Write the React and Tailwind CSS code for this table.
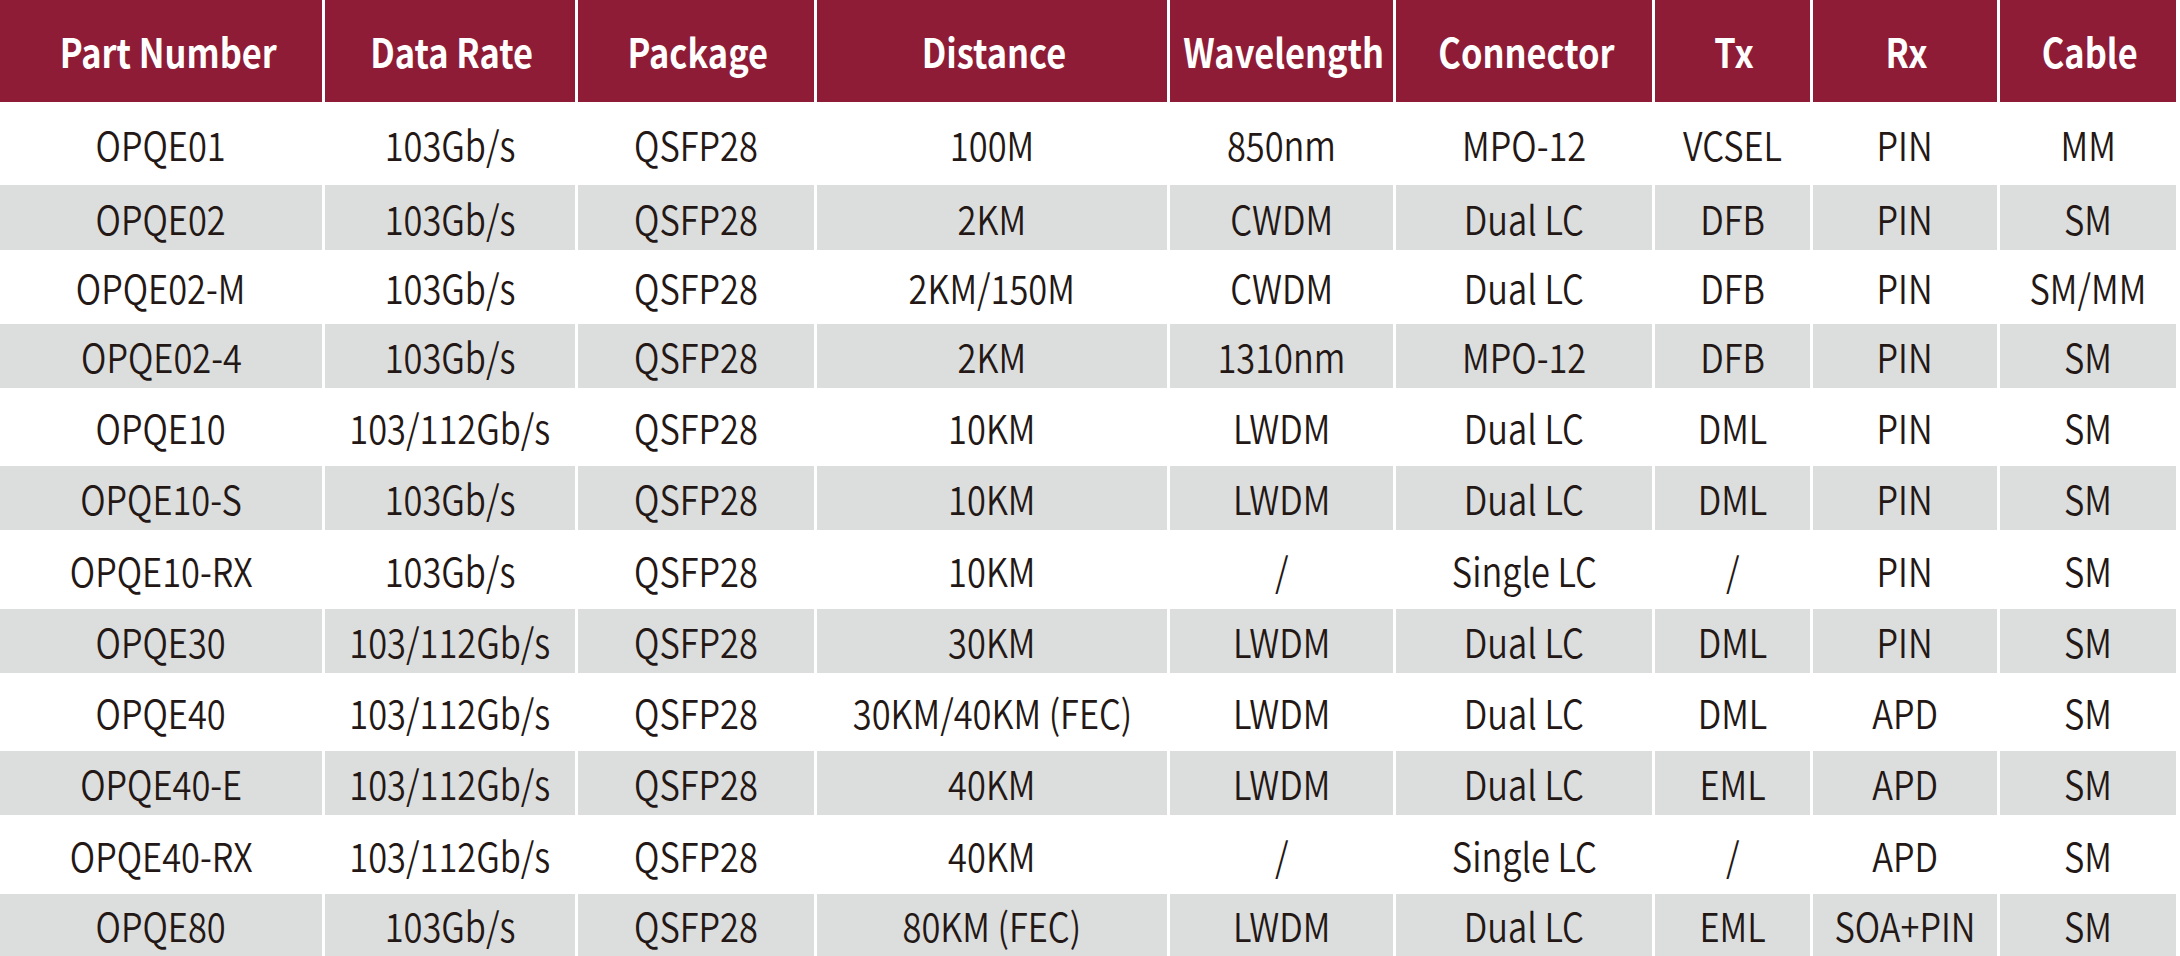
import React from "react";

const headers = ["Part Number", "Data Rate", "Package", "Distance", "Wavelength", "Connector", "Tx", "Rx", "Cable"];

const rows = [
  { h: "h-[83px]", gray: false, c: ["OPQE01", "103Gb/s", "QSFP28", "100M", "850nm", "MPO-12", "VCSEL", "PIN", "MM"] },
  { h: "h-[65px]", gray: true, c: ["OPQE02", "103Gb/s", "QSFP28", "2KM", "CWDM", "Dual LC", "DFB", "PIN", "SM"] },
  { h: "h-[74px]", gray: false, c: ["OPQE02-M", "103Gb/s", "QSFP28", "2KM/150M", "CWDM", "Dual LC", "DFB", "PIN", "SM/MM"] },
  { h: "h-[64px]", gray: true, c: ["OPQE02-4", "103Gb/s", "QSFP28", "2KM", "1310nm", "MPO-12", "DFB", "PIN", "SM"] },
  { h: "h-[78px]", gray: false, c: ["OPQE10", "103/112Gb/s", "QSFP28", "10KM", "LWDM", "Dual LC", "DML", "PIN", "SM"] },
  { h: "h-[64px]", gray: true, c: ["OPQE10-S", "103Gb/s", "QSFP28", "10KM", "LWDM", "Dual LC", "DML", "PIN", "SM"] },
  { h: "h-[79px]", gray: false, c: ["OPQE10-RX", "103Gb/s", "QSFP28", "10KM", "/", "Single LC", "/", "PIN", "SM"] },
  { h: "h-[64px]", gray: true, c: ["OPQE30", "103/112Gb/s", "QSFP28", "30KM", "LWDM", "Dual LC", "DML", "PIN", "SM"] },
  { h: "h-[78px]", gray: false, c: ["OPQE40", "103/112Gb/s", "QSFP28", "30KM/40KM (FEC)", "LWDM", "Dual LC", "DML", "APD", "SM"] },
  { h: "h-[64px]", gray: true, c: ["OPQE40-E", "103/112Gb/s", "QSFP28", "40KM", "LWDM", "Dual LC", "EML", "APD", "SM"] },
  { h: "h-[79px]", gray: false, c: ["OPQE40-RX", "103/112Gb/s", "QSFP28", "40KM", "/", "Single LC", "/", "APD", "SM"] },
  { h: "h-[62px]", gray: true, c: ["OPQE80", "103Gb/s", "QSFP28", "80KM (FEC)", "LWDM", "Dual LC", "EML", "SOA+PIN", "SM"] },
];

const gridCols = "grid grid-cols-[322px_250px_236px_350px_223px_256px_155px_184px_176px] gap-x-[3px]";

export default function App() {
  return (
    <div className="w-[2180px] h-[956px] bg-white overflow-hidden font-['Noto_Sans_CJK_SC','Noto_Sans',sans-serif]">
      <div className={`${gridCols} h-[102px]`}>
        {headers.map((t, j) => (
          <div
            key={t}
            className={`${j === 0 ? "pl-[14px]" : "pl-[4px]"} bg-[#8f1c36] flex items-center justify-center text-white font-bold text-[40px] leading-none whitespace-nowrap`}
          >
            <span className="inline-block scale-x-[0.86]">{t}</span>
          </div>
        ))}
      </div>
      {rows.map((r, i) => (
        <div key={i} className={`${gridCols} ${r.h}`}>
          {r.c.map((t, j) => (
            <div
              key={j}
              className={`${r.gray ? "bg-[#dcdddd]" : "bg-white"} flex items-center justify-center text-[#231815] text-[40px] font-[350] leading-none whitespace-nowrap`}
            >
              <span className="inline-block scale-x-[0.86]">{t}</span>
            </div>
          ))}
        </div>
      ))}
    </div>
  );
}
